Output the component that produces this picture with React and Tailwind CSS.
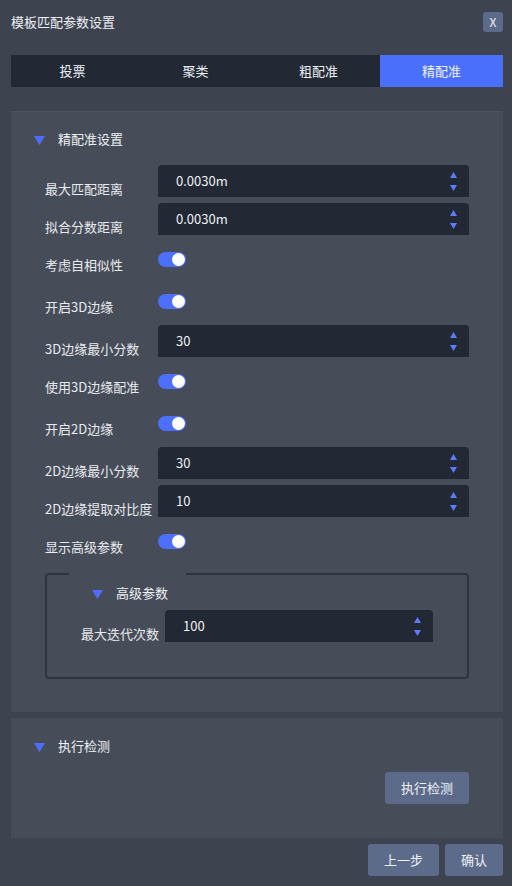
import React, { useState } from "react";

const FONT = { fontFamily: '"Noto Sans CJK SC", "Noto Sans", sans-serif' };

const Spinner = () => (
  <div className="absolute right-[12px] top-0 h-full flex flex-col justify-between pt-[7px] pb-[6px]">
    <svg width="7" height="6" viewBox="0 0 7 6"><polygon points="3.5,0 7,6 0,6" fill="#5b7cff" /></svg>
    <svg width="7" height="6" viewBox="0 0 7 6"><polygon points="0,0 7,0 3.5,6" fill="#5b7cff" /></svg>
  </div>
);

const NumberInput = ({ value, width = "w-[311px]" }) => (
  <div className={`relative h-8 ${width} shrink-0 bg-[#222834] rounded-t-[4px] flex items-center pl-[18px] text-[13px] text-[#eef1f6]`}>
    <span className="-mt-[1px]">{value}</span>
    <Spinner />
  </div>
);

const Toggle = ({ on, onClick }) => (
  <button
    onClick={onClick}
    className={`mt-[11px] w-[28px] h-[15px] rounded-full flex items-center px-[1px] ${on ? "bg-[#4c70fb] justify-end" : "bg-[#6b7280] justify-start"}`}
  >
    <span className="w-[13px] h-[13px] rounded-full bg-white" />
  </button>
);

const Caret = () => (
  <svg width="11" height="9" viewBox="0 0 11 9"><polygon points="0,0 11,0 5.5,9" fill="#4f6dfb" /></svg>
);

const Label = ({ children, w = "w-[113px]" }) => (
  <div className={`${w} h-8 shrink-0 pt-[14px] leading-5 text-[13px] text-[#e8ebf0] whitespace-nowrap`}>{children}</div>
);

const InputRow = ({ label, value }) => (
  <div className="flex h-8 mb-[6px]">
    <Label>{label}</Label>
    <NumberInput value={value} />
  </div>
);

const ToggleRow = ({ label, on, onClick }) => (
  <div className="flex h-9 mb-[6px]">
    <Label>{label}</Label>
    <Toggle on={on} onClick={onClick} />
  </div>
);

export default function App() {
  const tabs = ["投票", "聚类", "粗配准", "精配准"];
  const [active, setActive] = useState(3);
  const [toggles, setToggles] = useState({ self: true, e3d: true, use3d: true, e2d: true, adv: true });
  const flip = (k) => setToggles((t) => ({ ...t, [k]: !t[k] }));

  return (
    <div style={FONT} className="w-[512px] h-[886px] bg-[#3e444f] pl-[11px] pr-[9px] flex flex-col overflow-hidden">
      {/* header */}
      <div className="h-[44px] flex items-center justify-between">
        <span className="text-[13px] text-[#eef1f6] -mt-[1px]">模板匹配参数设置</span>
        <button className="w-[20px] h-[20px] rounded-[3px] bg-[#5d6b8a] text-[#eef1f6] text-[12px] flex items-center justify-center">X</button>
      </div>

      {/* tabs */}
      <div className="mt-[11px] h-8 grid grid-cols-4 bg-[#222834]">
        {tabs.map((t, i) => (
          <button
            key={t}
            onClick={() => setActive(i)}
            className={`text-[13px] text-[#eef1f6] ${active === i ? "bg-[#4a6ffb]" : ""}`}
          >
            {t}
          </button>
        ))}
      </div>

      {/* main panel */}
      <div className="mt-[24px] h-[601px] shrink-0 bg-[#474d58] border-t border-[#4d535e] pl-[23px]">
        <div className="flex items-center gap-[13px] mt-[22px] h-[12px]">
          <Caret />
          <span className="text-[13px] text-[#eef1f6] -mt-[2px]">精配准设置</span>
        </div>
        <div className="mt-[19px] pl-[11px]">
          <InputRow label="最大匹配距离" value="0.0030m" />
          <InputRow label="拟合分数距离" value="0.0030m" />
          <ToggleRow label="考虑自相似性" on={toggles.self} onClick={() => flip("self")} />
          <ToggleRow label="开启3D边缘" on={toggles.e3d} onClick={() => flip("e3d")} />
          <InputRow label="3D边缘最小分数" value="30" />
          <ToggleRow label="使用3D边缘配准" on={toggles.use3d} onClick={() => flip("use3d")} />
          <ToggleRow label="开启2D边缘" on={toggles.e2d} onClick={() => flip("e2d")} />
          <InputRow label="2D边缘最小分数" value="30" />
          <InputRow label="2D边缘提取对比度" value="10" />
          <ToggleRow label="显示高级参数" on={toggles.adv} onClick={() => flip("adv")} />

          {toggles.adv && (
            <fieldset className="mt-[14px] w-[424px] h-[106px] border-2 border-[#2f343e] rounded-[4px] p-0 m-0">
              <legend className="ml-[22px] w-[117px] h-0 p-0" />
              <div className="pl-[34px]">
                <div className="flex items-center gap-[13px] pl-[11px] mt-[13px] h-[12px]">
                  <Caret />
                  <span className="text-[13px] text-[#eef1f6] -mt-[2px]">高级参数</span>
                </div>
                <div className="flex mt-[10px]">
                  <Label w="w-[84px]">最大迭代次数</Label>
                  <NumberInput value="100" width="w-[268px]" />
                </div>
              </div>
            </fieldset>
          )}
        </div>
      </div>

      {/* execute panel */}
      <div className="mt-[6px] h-[120px] shrink-0 bg-[#474d58] pl-[23px] pr-[34px]">
        <div className="flex items-center gap-[13px] mt-[23px] h-[12px]">
          <Caret />
          <span className="text-[13px] text-[#eef1f6] -mt-[2px]">执行检测</span>
        </div>
        <div className="flex justify-end mt-[19px]">
          <button className="w-[84px] h-8 rounded-[3px] bg-[#5d6b8a] text-[13px] text-[#eef1f6]">执行检测</button>
        </div>
      </div>

      {/* footer */}
      <div className="mt-[6px] flex justify-end gap-[6px]">
        <button className="w-[71px] h-8 rounded-[3px] bg-[#5d6b8a] text-[13px] text-[#eef1f6]">上一步</button>
        <button className="w-[58px] h-8 rounded-[3px] bg-[#5d6b8a] text-[13px] text-[#eef1f6]">确认</button>
      </div>
    </div>
  );
}
